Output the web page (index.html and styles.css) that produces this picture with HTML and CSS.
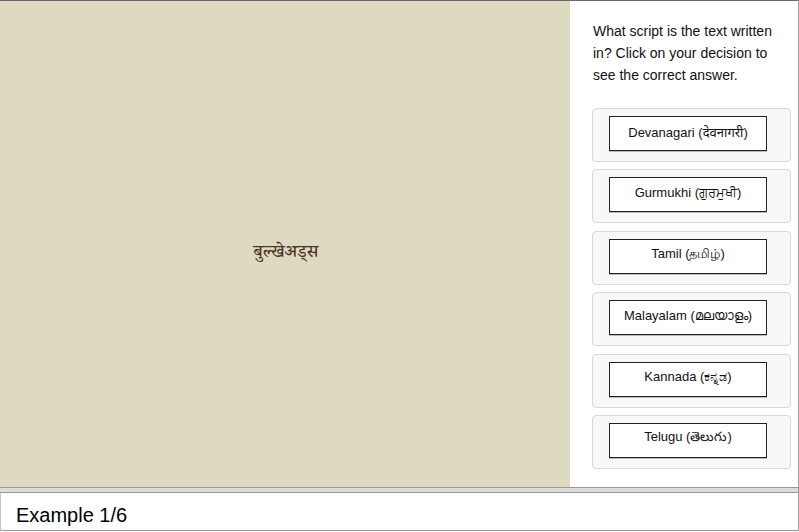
FILE: index.html
```html
<!DOCTYPE html>
<html>
<head>
<meta charset="utf-8">
<link rel="stylesheet" href="styles.css">
</head>
<body>
<div class="frame">
  <div class="stage">
    <span class="word">बुल्खेअड्स</span>
  </div>
  <div class="side">
    <p class="question">What script is the text written in? Click on your decision to see the correct answer.</p>
    <div class="options">
      <div class="card"><div class="btn">Devanagari (देवनागरी)</div></div>
      <div class="card"><div class="btn">Gurmukhi (ਗੁਰਮੁਖੀ)</div></div>
      <div class="card"><div class="btn">Tamil (தமிழ்)</div></div>
      <div class="card"><div class="btn">Malayalam (മലയാളം)</div></div>
      <div class="card"><div class="btn">Kannada (ಕನ್ನಡ)</div></div>
      <div class="card"><div class="btn">Telugu (తెలుగు)</div></div>
    </div>
  </div>
</div>
<div class="divider"></div>
<div class="footer">Example 1/6</div>
</body>
</html>
```
FILE: styles.css
```css
html, body {
  margin: 0;
  padding: 0;
  background: #fff;
}
body {
  width: 799px;
  height: 532px;
  overflow: hidden;
  font-family: "Liberation Sans", Arial, "Noto Sans", sans-serif;
}
.frame {
  display: flex;
  height: 486px;
  border-top: 1px solid #6a6a6a;
  border-right: 1px solid #a0a0a0;
}
.stage {
  width: 570px;
  background: #dedac2;
  display: flex;
  align-items: center;
  justify-content: center;
}
.word {
  margin-top: 20px;
  margin-left: 2px;
  font-size: 18px;
  font-weight: 500;
  color: #4e3328;
  font-family: "Noto Serif Devanagari", "Noto Sans Devanagari", "FreeSerif", "Lohit Devanagari", serif;
}
.side {
  flex: 1;
  background: #fff;
  padding: 19px 7px 0 22px;
}
.question {
  margin: 0 0 0 1px;
  font-size: 14px;
  line-height: 22px;
  color: #111;
  width: 192px;
}
.options {
  margin-top: 22px;
  display: flex;
  flex-direction: column;
  gap: 7.4px;
}
.card {
  height: 45px;
  border: 1px solid #d8d8d8;
  border-radius: 4px;
  background: #f8f8f8;
  display: flex;
  justify-content: center;
  padding-top: 7px;
  padding-right: 7px;
}
.btn {
  width: 156px;
  height: 29px;
  padding-bottom: 4px;
  border: 1px solid #222;
  background: #fff;
  font-size: 13px;
  color: #111;
  display: flex;
  align-items: center;
  justify-content: center;
  box-shadow: 0 1px 0 #bbb;
}
.divider {
  height: 4px;
  background: #dcdcdc;
  border-top: 1px solid #9a9a9a;
  border-bottom: 1px solid #9a9a9a;
  border-right: 1px solid #9a9a9a;
}
.footer {
  height: 33px;
  padding-top: 4px;
  border-bottom: 1px solid #9a9a9a;
  border-right: 1px solid #9a9a9a;
  border-left: 1px solid #c4c4c4;
  padding-left: 15px;
  font-size: 20px;
  line-height: 37px;
  color: #000;
}
```
